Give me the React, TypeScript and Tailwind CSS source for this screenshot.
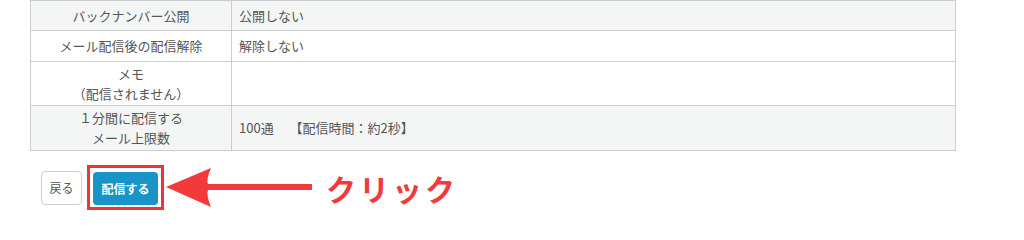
const rows: { label: string[]; value: string; gray: boolean; h: string }[] = [
  { label: [""], value: "", gray: false, h: "h-[31px]" },
  { label: ["バックナンバー公開"], value: "公開しない", gray: true, h: "h-[30px]" },
  { label: ["メール配信後の配信解除"], value: "解除しない", gray: false, h: "h-[31px]" },
  { label: ["メモ", "（配信されません）"], value: "", gray: false, h: "h-[44px]" },
  { label: ["１分間に配信する", "メール上限数"], value: "100通　 【配信時間：約2秒】", gray: true, h: "h-[44px]" },
];

export default function App() {
  return (
    <div
      className="w-[1024px] h-[220px] overflow-hidden bg-white"
      style={{ fontFamily: '"Noto Sans CJK JP", "Noto Sans", sans-serif' }}
    >
      <div className="ml-[30px] mt-[-30px] w-[926px] border border-[#cccccc] border-t-0">
        {rows.map((r, i) => (
          <div
            key={i}
            className={`flex ${r.h} border-b border-[#cccccc] last:border-b-0 ${r.gray ? "bg-[#f4f5f5]" : "bg-white"}`}
          >
            <div className="w-[201px] shrink-0 border-r border-[#cccccc] flex flex-col items-center justify-center text-[13px] leading-[20px] text-[#555]">
              {r.label.map((l, j) => (
                <span key={j}>{l}</span>
              ))}
            </div>
            <div className="flex items-center pl-[7px] text-[13px] text-[#555] whitespace-pre">{r.value}</div>
          </div>
        ))}
      </div>

      <div className="flex items-center ml-[41px] mt-[14px]">
        <button className="w-[41px] h-[34px] rounded-[4px] border border-[#cfcfcf] bg-white text-[12px] text-[#555] flex items-center justify-center">
          戻る
        </button>
        <div className="ml-[5px] border-[3px] border-[#f03434] p-[3px] pb-[2px] pt-[4px]">
          <button className="w-[65px] h-[33px] rounded-[4px] bg-[#1894c8] text-white text-[12px] font-bold flex items-center justify-center">
            配信する
          </button>
        </div>
        <svg width="150" height="44" viewBox="0 0 150 44" className="shrink-0">
          <path d="M2 21 L47 2 Q42 14 44 18 L148 18 L148 24 L44 24 Q42 29 47 41 Z" fill="#f23a3a" />
        </svg>
        <span className="ml-[12px] text-[30px] font-bold text-[#f23a3a] tracking-[3px] leading-none">
          クリック
        </span>
      </div>
    </div>
  );
}
